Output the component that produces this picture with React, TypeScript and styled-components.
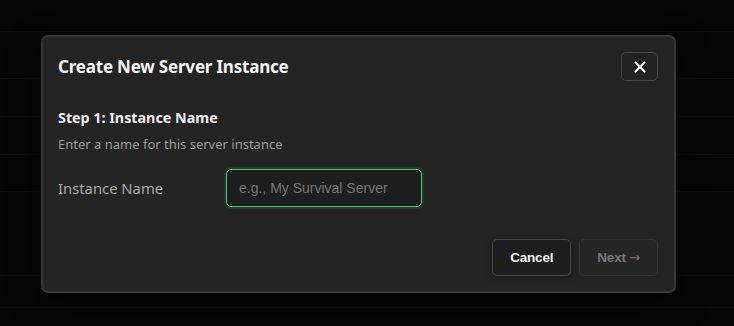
import React from "react";
import styled, { createGlobalStyle } from "styled-components";

const Global = createGlobalStyle`
  html, body { margin: 0; padding: 0; background: #0b0b0b; }
  body { font-family: "Noto Sans", "Open Sans", sans-serif; overflow: hidden; }
  * { box-sizing: border-box; }
`;

const Page = styled.div`
  position: relative;
  width: 734px;
  height: 326px;
  background: #0b0b0b;
  overflow: hidden;
`;

const Backdrop = styled.div`
  display: flex;
  flex-direction: column;
`;

const BgRow = styled.div<{ $h: number }>`
  height: ${(p) => p.$h}px;
  border-bottom: 1px solid #161616;
`;

const Overlay = styled.div`
  position: absolute;
  inset: 0;
  background: rgba(0, 0, 0, 0.35);
  padding: 35px 0 0 41px;
`;

const Modal = styled.div`
  width: 635px;
  height: 258px;
  background: #242424;
  border: 2px solid #383838;
  border-radius: 7px;
  padding: 15px 16px 15px 15px;
  display: flex;
  flex-direction: column;
  box-shadow: 0 10px 30px rgba(0, 0, 0, 0.6);
`;

const Header = styled.div`
  display: flex;
  align-items: center;
  justify-content: space-between;
`;

const Title = styled.h2`
  margin: 0;
  font-size: 17px;
  font-weight: 700;
  color: #f5f5f5;
  letter-spacing: -0.2px;
`;

const CloseButton = styled.button`
  width: 37px;
  height: 29px;
  border: 1px solid #474747;
  border-radius: 5px;
  background: #222;
  color: #fff;
  display: flex;
  align-items: center;
  justify-content: center;
  padding: 0;
`;

const StepTitle = styled.h3`
  margin: 27px 0 0;
  font-size: 14.3px;
  font-weight: 700;
  color: #f0f0f0;
`;

const StepDesc = styled.p`
  margin: 8px 0 0;
  font-size: 13px;
  color: #9b9b9b;
`;

const FieldRow = styled.div`
  display: flex;
  align-items: center;
  margin-top: 16px;
`;

const Label = styled.label`
  width: 168px;
  font-size: 14.8px;
  color: #a8a8a8;
`;

const Input = styled.input`
  width: 196px;
  height: 38px;
  background: #1e1e1e;
  border: 1px solid #3fce6e;
  border-radius: 5px;
  box-shadow: 0 0 0 2px rgba(63, 206, 110, 0.12);
  padding: 0 12px;
  font-family: "Liberation Sans", Arial, sans-serif;
  font-size: 14px;
  color: #ddd;
  outline: none;
  &::placeholder { color: #767676; }
`;

const Footer = styled.div`
  margin-top: auto;
  display: flex;
  justify-content: flex-end;
  gap: 8px;
`;

const Button = styled.button<{ $disabled?: boolean }>`
  height: 37px;
  padding: 0 17px;
  border-radius: 5px;
  font-family: "Liberation Sans", Arial, sans-serif;
  font-size: 13.5px;
  font-weight: 700;
  letter-spacing: -0.2px;
  border: 1px solid ${(p) => (p.$disabled ? "#343434" : "#484848")};
  background: ${(p) => (p.$disabled ? "#262626" : "#1e1e1e")};
  color: ${(p) => (p.$disabled ? "#777" : "#f2f2f2")};
  box-shadow: ${(p) => (p.$disabled ? "none" : "0 2px 6px rgba(0,0,0,0.35)")};
`;

const Arrow = styled.span`
  font-family: "DejaVu Sans", sans-serif;
  font-weight: 400;
  font-size: 13px;
`;

const rows = [32, 47, 38, 38, 37, 84, 32, 40];

export default function App() {
  return (
    <Page>
      <Global />
      <Backdrop>
        {rows.map((h, i) => (
          <BgRow key={i} $h={h} />
        ))}
      </Backdrop>
      <Overlay>
        <Modal>
          <Header>
            <Title>Create New Server Instance</Title>
            <CloseButton aria-label="Close">
              <svg width="12" height="12" viewBox="0 0 12 12">
                <path d="M1.5 1.5 L10.5 10.5 M10.5 1.5 L1.5 10.5" stroke="#fff" strokeWidth="2" strokeLinecap="round" />
              </svg>
            </CloseButton>
          </Header>
          <StepTitle>Step 1: Instance Name</StepTitle>
          <StepDesc>Enter a name for this server instance</StepDesc>
          <FieldRow>
            <Label>Instance Name</Label>
            <Input placeholder="e.g., My Survival Server" />
          </FieldRow>
          <Footer>
            <Button>Cancel</Button>
            <Button $disabled>
              Next <Arrow>→</Arrow>
            </Button>
          </Footer>
        </Modal>
      </Overlay>
    </Page>
  );
}
